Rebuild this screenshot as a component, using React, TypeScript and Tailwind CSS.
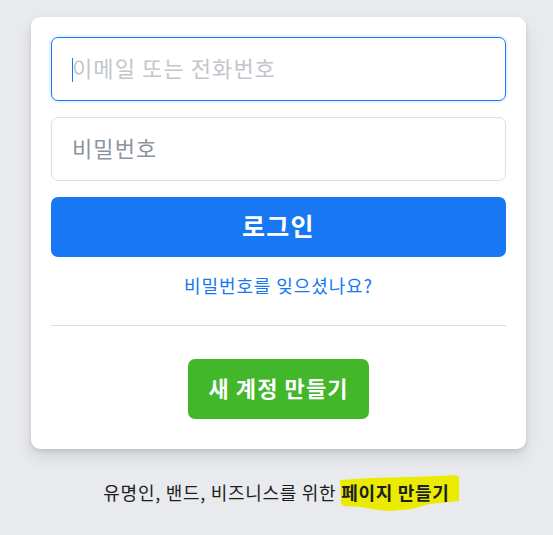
import React from 'react';

const font = { fontFamily: '"Noto Sans CJK KR", "Noto Sans", sans-serif' };

const LoginCard: React.FC = () => {
  const [email, setEmail] = React.useState('');
  const [password, setPassword] = React.useState('');

  return (
    <div className="ml-[31px] w-[495px] rounded-[9px] bg-white px-5 pt-5 pb-[30px] shadow-[0_2px_4px_rgba(0,0,0,0.1),0_8px_16px_rgba(0,0,0,0.1)]">
      <form onSubmit={(e) => e.preventDefault()} className="flex flex-col">
        <div className="relative">
          <input
            type="text"
            value={email}
            onChange={(e) => setEmail(e.target.value)}
            placeholder="이메일 또는 전화번호"
            className="h-16 w-full rounded-[7px] border border-[#1877f2] px-[20px] pb-[5px] text-[22px] tracking-[0.05em] text-[#1c1e21] caret-transparent shadow-[0_0_0_2px_#e7f3ff] outline-none placeholder:text-[#c3c6cb]"
          />
          {email === '' && (
            <span className="absolute left-[21px] top-[21px] h-6 w-px bg-[#1877f2]" />
          )}
        </div>
        <input
          type="password"
          value={password}
          onChange={(e) => setPassword(e.target.value)}
          placeholder="비밀번호"
          className="mt-4 h-16 w-full rounded-[7px] border border-[#dddfe2] px-[20px] pb-[5px] text-[22px] tracking-[0.05em] text-[#1c1e21] outline-none placeholder:text-[#8d949e]"
        />
        <button
          type="submit"
          className="mt-4 h-[60px] w-full rounded-[7px] bg-[#1877f2] pb-[3px] text-[25px] font-bold tracking-[0.05em] text-white"
        >
          로그인
        </button>
        <a href="#" className="mt-[16px] text-center text-[18px] leading-6 tracking-[0.05em] text-[#1877f2]">
          비밀번호를 잊으셨나요?
        </a>
        <div className="mt-[28px] h-px w-full bg-[#dadde1]" />
        <div className="flex justify-center pt-[33px]">
          <button
            type="button"
            className="h-[60px] rounded-[7px] bg-[#42b72a] px-[20px] pb-[3px] text-[22px] font-bold tracking-[0.05em] text-white"
          >
            새 계정 만들기
          </button>
        </div>
      </form>
    </div>
  );
};

export default function App() {
  return (
    <div style={font} className="min-h-[535px] bg-[#e9eaee] pt-[17px]">
      <LoginCard />
      <p className="mt-[31px] text-center text-[18px] leading-6 tracking-[0.04em] text-[#1c1e21]">
        유명인, 밴드, 비즈니스를 위한{' '}
        <span className="relative inline-block font-bold">
          <svg
            className="absolute left-[-1px] top-[-5px]"
            width="119"
            height="36"
            viewBox="0 0 119 36"
          >
            <path
              d="M0 5 L30 3 L70 2 L100 1 L116 0 L119 2 L119 26 L110 27 L90 29 L72 34 L50 36 L38 35 L20 32 L4 31 L1 28 Z"
              fill="#ebeb00"
            />
          </svg>
          <span className="relative">페이지 만들기</span>
        </span>
      </p>
    </div>
  );
}
